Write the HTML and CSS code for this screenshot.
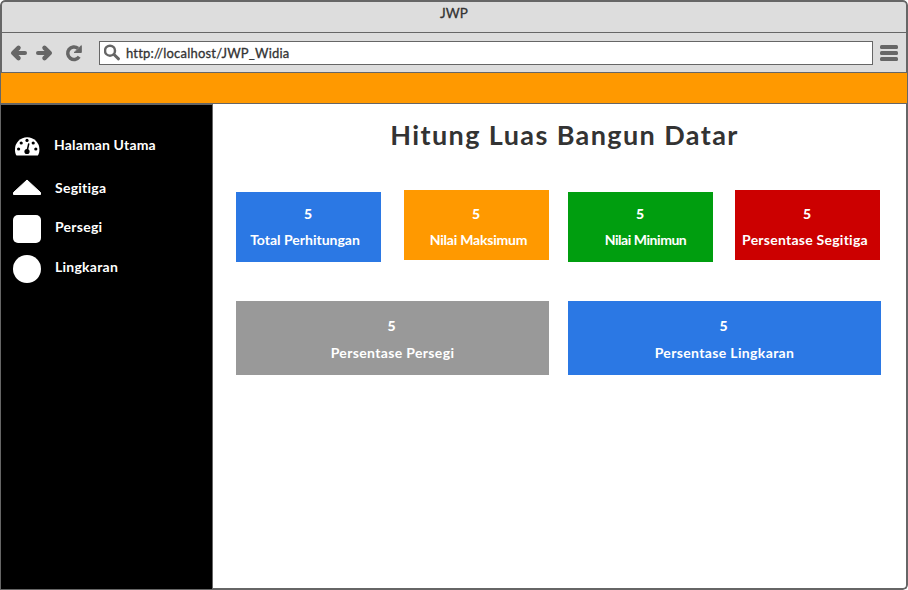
FILE: index.html
```html
<!DOCTYPE html>
<html lang="id">
<head>
<meta charset="utf-8">
<title>JWP</title>
<link rel="stylesheet" href="styles.css">
</head>
<body>
<div class="window">
  <header class="titlebar"><span>JWP</span></header>
  <div class="toolbar">
    <svg class="nav-icons" width="86" height="24" viewBox="0 0 86 24" fill="none" stroke="#666" stroke-width="4" stroke-linecap="round" stroke-linejoin="round">
      <path d="M16 12H5"/><path d="M9.500 6.800L4.200 12l5.300 5.200" stroke-width="4.500"/>
      <path d="M29 12h11"/><path d="M35.500 6.800L40.800 12l-5.300 5.200" stroke-width="4.500"/>
      <path d="M70.200 15.800A6.300 6.300 0 1 1 69 7.300" stroke-width="3.500" stroke-linecap="butt"/>
      <path d="M72.300 5v6.500h-6.800z" fill="#666" stroke-width="1"/>
    </svg>
    <div class="address">
      <svg width="18" height="18" viewBox="0 0 18 18" fill="none" stroke="#666" stroke-linecap="round"><circle cx="6" cy="6.700" r="5" stroke-width="2.500"/><path d="M10 10.500l4.500 4.300" stroke-width="3"/></svg>
      <span class="url">http://localhost/JWP_Widia</span>
    </div>
    <svg class="menu" width="18" height="18" viewBox="0 0 18 18" fill="#666"><rect y="1" width="18" height="4" rx="1.500"/><rect y="7" width="18" height="4" rx="1.500"/><rect y="13" width="18" height="4" rx="1.500"/></svg>
  </div>
  <div class="banner"></div>
  <div class="content">
    <nav class="sidebar">
      <a class="item home">
        <svg width="28" height="28" viewBox="0 0 28 28"><path d="M3.500 23.500C2 21.500 2 19 2 17.500a12.200 12.200 0 0 1 24.400 0c0 2-.4 4.500-1.600 6z" fill="#fff"/><g fill="#000"><circle cx="5.600" cy="17" r="1.600"/><circle cx="8.200" cy="11" r="1.600"/><circle cx="14" cy="8.400" r="1.600"/><circle cx="20.200" cy="11" r="1.600"/><circle cx="22.800" cy="17" r="1.600"/><circle cx="14" cy="19.500" r="2.600"/></g><path d="M14 19.500l1.700-7.500" stroke="#000" stroke-width="1.500" stroke-linecap="round"/></svg>
        <span>Halaman Utama</span>
      </a>
      <a class="item triangle">
        <svg width="28" height="28" viewBox="0 0 28 28"><path d="M14 6L27.500 18.500v2H.5v-2z" fill="#fff" stroke="#fff" stroke-linejoin="round"/></svg>
        <span>Segitiga</span>
      </a>
      <a class="item square">
        <svg width="28" height="28" viewBox="0 0 28 28"><rect width="28" height="28" rx="5" fill="#fff"/></svg>
        <span>Persegi</span>
      </a>
      <a class="item circle">
        <svg width="28" height="28" viewBox="0 0 28 28"><circle cx="14" cy="14" r="14" fill="#fff"/></svg>
        <span>Lingkaran</span>
      </a>
    </nav>
    <main class="main">
      <h1>Hitung Luas Bangun Datar</h1>
      <section class="cards">
        <article class="card total"><b>5</b><span>Total Perhitungan</span></article>
        <article class="card maximum"><b>5</b><span>Nilai Maksimum</span></article>
        <article class="card minimum"><b>5</b><span>Nilai Minimun</span></article>
        <article class="card share-triangle"><b>5</b><span>Persentase Segitiga</span></article>
      </section>
      <section class="cards wide">
        <article class="card share-square"><b>5</b><span>Persentase Persegi</span></article>
        <article class="card share-circle"><b>5</b><span>Persentase Lingkaran</span></article>
      </section>
    </main>
  </div>
</div>
</body>
</html>
```
FILE: styles.css
```css
* { box-sizing: border-box; }
body { margin: 0; background: #fff; font-family: Lato, "Liberation Sans", sans-serif; font-size: 14px; font-weight: 700; color: #333; font-variant-ligatures: none; }
.window { width: 908px; height: 590px; display: flex; flex-direction: column; overflow: hidden; border-radius: 5px 5px 5px 0; background: #fff; }
.titlebar { height: 33px; flex: none; background: #ddd; border: solid #666; border-width: 2px 2px 1px; border-radius: 5px 5px 0 0; text-align: center; line-height: 22px; font-size: 13.5px; font-weight: 400; -webkit-text-stroke: .3px #333; }
.toolbar { height: 40px; flex: none; display: flex; align-items: center; background: #ddd; border: solid #666; border-width: 0 2px 1px; }
.nav-icons { margin-left: 7px; flex: none; }
.address { margin-left: 4px; width: 774px; height: 24px; border: 1px solid #666; background: #fff; display: flex; align-items: center; padding-left: 4px; }
.url { margin-left: 4px; font-size: 13px; font-weight: 400; line-height: 20px; letter-spacing: .2px; -webkit-text-stroke: .3px #333; }
.menu { margin-left: 7px; }
.banner { height: 31px; flex: none; background: #ff9900; border: solid #666; border-width: 0 1px 1px; }
.content { flex: 1; display: flex; }
.sidebar { width: 213px; background: #000; border: 1px solid #666; padding: 27px 0 0 12px; color: #fff; }
.item { display: flex; align-items: center; height: 28px; white-space: nowrap; }
.item svg { flex: none; }
.item span { margin-left: 14px; line-height: 20px; margin-top: -4px; letter-spacing: .25px; }
.home span { margin-left: 13px; margin-top: -3px; letter-spacing: .15px; }
.triangle { margin-top: 14px; }
.triangle span { margin-top: 0; }
.square { margin-top: 13px; }
.circle { margin-top: 12px; }
.main { flex: 1; border: solid #666; border-width: 0 2px 2px 0; border-bottom-right-radius: 5px; padding: 14px 0 0 23px; }
h1 { margin: 0 0 38px; width: 657px; text-align: center; font-size: 27px; line-height: 34px; letter-spacing: 1.4px; white-space: nowrap; }
.cards { display: grid; grid-template-columns: 145px 145px 145px 145px; column-gap: 23px; align-items: start; }
.card { height: 70px; display: flex; flex-direction: column; align-items: center; gap: 6px; padding-top: 14px; color: #fff; line-height: 20px; white-space: nowrap; }
.total { background: #2b78e4; margin-top: 2px; padding-top: 12px; }
.maximum { background: #ff9900; }
.minimum { background: #009e0f; margin: 2px 0 0 -4px; width: 145px; padding-top: 12px; }
.share-triangle { background: #cc0000; margin-left: -5px; width: 145px; }
.wide { grid-template-columns: 313px 313px; column-gap: 19px; margin-top: 39px; }
.wide .card { height: 74px; padding-top: 15px; gap: 7px; }
.share-square { background: #999; }
.share-circle { background: #2b78e4; }
.card b { margin-left: -1px; }
.total span { margin-left: -7px; }
.maximum span { margin-left: 4px; letter-spacing: -.2px; }
.minimum span { margin-left: 10px; letter-spacing: -.45px; }
.share-triangle span { margin-left: -5px; letter-spacing: .25px; }
.wide .card b { margin-left: -2px; }
.wide span { letter-spacing: .35px; }
```
